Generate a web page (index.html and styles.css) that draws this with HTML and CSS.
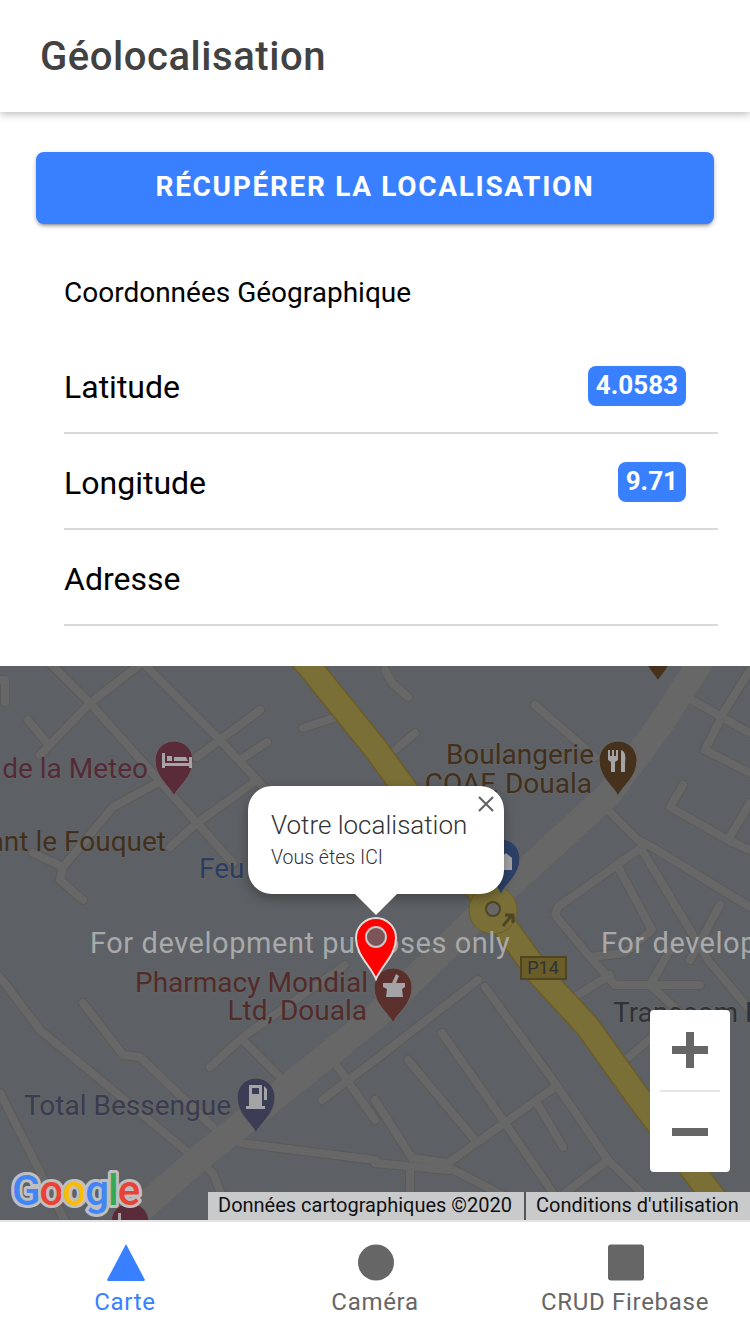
FILE: index.html
```html
<!DOCTYPE html>
<html lang="fr">
<head>
  <meta charset="utf-8">
  <title>Géolocalisation</title>
  <link rel="stylesheet" href="styles.css">
</head>
<body>

<!-- header -->
<header class="top_bar">
  <h1 class="top_title">Géolocalisation</h1>
</header>

<main class="content">
  <div class="btn_holder">
    <button type="button" class="locate_btn">Récupérer la localisation</button>
  </div>

  <p class="coords_title">Coordonnées Géographique</p>

  <div class="coords_list">
    <div class="coords_row">
      <span>Latitude</span>
      <span class="badge">4.0583</span>
    </div>
    <div class="coords_row">
      <span>Longitude</span>
      <span class="badge">9.71</span>
    </div>
    <div class="coords_row">
      <span>Adresse</span>
    </div>
  </div>

  <!-- map, coordinates in the svg are page coordinates -->
  <div class="map">
    <svg class="map_canvas" viewBox="0 666 750 554" width="750" height="554">
      <defs>
        <g id="small_roads">
          <path d="M47 660 90 703 197 823 233 863"/>
          <path d="M143 662 90 703 40 755"/>
          <path d="M28 720 47 743"/>
          <path d="M147 667 217 737 257 780 275 800"/>
          <path d="M260 710 197 757"/>
          <path d="M267 742 240 760"/>
          <path d="M157 783 113 807 63 867 60 880 83 900"/>
          <path d="M253 783 197 823 170 847"/>
          <path d="M33 853 63 867"/>
          <path d="M-5 680H5V702"/>
          <path d="M303 728 337 717"/>
          <path d="M385 670 392 683 408 697"/>
          <path d="M415 733 395 750"/>
          <path d="M535 705 595 757"/>
          <path d="M692 700 750 733"/>
          <path d="M725 710 750 670"/>
          <path d="M725 710 705 750 750 773"/>
          <path d="M683 785 670 807 728 840 750 850"/>
          <path d="M728 840 750 803"/>
          <path d="M608 810 638 840 652 847 750 907"/>
          <path d="M642 850 708 960 750 1010"/>
          <path d="M642 847 558 907 555 915 590 957 625 953 652 930 618 867"/>
          <path d="M720 905 690 960"/>
          <path d="M590 957 615 985 700 985"/>
          <path d="M478 980 375 1060 322 1100"/>
          <path d="M442 1033 503 1120 575 1225"/>
          <path d="M408 1060 475 1140"/>
          <path d="M375 1100 412 1158 448 1163 555 1087"/>
          <path d="M485 987 555 1083 608 1160 642 1193 660 1220"/>
          <path d="M608 1160 565 1193"/>
          <path d="M448 1167 560 1225"/>
          <path d="M537 1103 563 1147"/>
          <path d="M410 1167V1190"/>
          <path d="M375 1163 448 1170"/>
          <path d="M625 1060 655 1035"/>
          <path d="M0 977 40 1030 213 1173 233 1225"/>
          <path d="M83 1003 123 1055 140 1057 213 1127"/>
          <path d="M210 1067 243 1037 345 965"/>
          <path d="M243 1040 280 1077"/>
          <path d="M335 1063 375 1120"/>
          <path d="M240 1143 375 1160"/>
          <path d="M0 1093 67 1225"/>
          <path d="M670 950 650 985 710 1040"/>
          <path d="M570 1000 610 975"/>
        </g>
      </defs>
      <use href="#small_roads" class="road_edge"/>
      <use href="#small_roads" class="road"/>
      <path class="road_wide" d="M705 655 660 725 608 795 508 887 375 1017 197 1160 140 1210"/>
      <path class="highway_edge" d="M290 645 309 666 375 748 493 910 540 975 588 1027 635 1093 708 1190 735 1225"/>
      <path class="highway" d="M290 645 309 666 375 748 493 910 540 975 588 1027 635 1093 708 1190 735 1225"/>
      <circle class="roundabout" cx="493" cy="910" r="24"/>
      <circle class="round_hole" cx="493" cy="909" r="7"/>
      <path class="arrow" d="M503 926 512 915M505 915H513V923"/>

      <text class="for_dev" x="90" y="953">For development purposes only</text>
      <text class="for_dev" x="601" y="953">For development purposes only</text>

      <!-- poi pins -->
      <path class="pin pin_hotel" d="M174 796C170 786 155 778 155 760A19 19 0 0 1 193 760C193 778 178 786 174 796Z"/>
      <path class="pin_glyph" d="M162 753H165V763H189V757H192V768H189V766H165V768H162ZM167 756H172V761H167ZM174 757 186 757 188 761H174Z"/>
      <path class="pin pin_food" d="M618 796C614 786 599 778 599 760A19 19 0 0 1 637 760C637 778 622 786 618 796Z"/>
      <path class="pin_glyph" d="M608 750H610V756H612V750H614V756H616V750H618V760L615 762V772H611V762L608 760ZM621 750C625 751 626 756 625 762V772H621Z"/>
      <path class="pin pin_food" d="M658 681C655 675 648 670 646 660H670C668 670 661 675 658 681Z"/>
      <path class="pin pin_hosp" d="M501 894C497 884 482 876 482 858A19 19 0 0 1 520 858C520 876 505 884 501 894Z"/>
      <path class="pin_glyph" d="M500 858 506 853 512 858V870H500Z"/>
      <path class="pin pin_pharm" d="M393 1023C389 1013 374 1005 374 987A19 19 0 0 1 412 987C412 1005 397 1013 393 1023Z"/>
      <path class="pin_glyph" d="M383 983H405V987L402 989 403 997H386L387 989 383 987ZM392 983 396 974 399 976 396 983Z"/>
      <path class="pin pin_fuel" d="M256 1133C252 1123 237 1115 237 1097A19 19 0 0 1 275 1097C275 1115 260 1123 256 1133Z"/>
      <path class="pin_glyph" d="M249 1085H262V1106H265V1109H246V1106H249ZM252 1088V1094H259V1088ZM264 1086 267 1089V1100H264Z"/>
      <path class="pin pin_hotel" d="M130 1245C126 1235 111 1227 111 1222A19 19 0 0 1 149 1222C149 1227 134 1235 130 1245Z"/>
      <path class="pin_glyph" d="M118 1213H121V1220H142V1224H118Z"/>

      <text class="label label_hotel" x="148" y="778" text-anchor="end">de la Meteo</text>
      <text class="label label_food" x="166" y="851" text-anchor="end">ant le Fouquet</text>
      <text class="label label_hosp" x="199" y="878">Feu</text>
      <text class="label label_food" x="594" y="764" text-anchor="end">Boulangerie</text>
      <text class="label label_food" x="592" y="793" text-anchor="end">COAF, Douala</text>
      <text class="label label_pharm" x="135" y="992">Pharmacy Mondial</text>
      <text class="label label_pharm" x="367" y="1020" text-anchor="end">Ltd, Douala</text>
      <text class="label label_fuel" x="24" y="1115">Total Bessengue</text>
      <text class="label label_dark" x="613" y="1022">Transcom Pro</text>

      <rect class="shield" x="521" y="957" width="45" height="22"/>
      <text class="shield_text" x="543" y="974" text-anchor="middle">P14</text>

      <!-- google logo -->
      <text class="google" x="12" y="1205"><tspan class="g_blue">G</tspan><tspan class="g_red">o</tspan><tspan class="g_yellow">o</tspan><tspan class="g_blue">g</tspan><tspan class="g_green">l</tspan><tspan class="g_red">e</tspan></text>

      <!-- red location pin -->
      <path class="here_pin" d="M376 979C370 965 356 955 356 938A20 20 0 0 1 396 938C396 955 382 965 376 979Z"/>
      <circle class="here_dot" cx="376" cy="937" r="10"/>
    </svg>

    <!-- info window -->
    <div class="info_window">
      <div class="info_title">Votre localisation</div>
      <div class="info_text">Vous êtes ICI</div>
      <svg class="info_close" viewBox="0 0 16 16" width="16" height="16"><path d="M1 1 15 15M15 1 1 15"/></svg>
    </div>

    <!-- zoom control -->
    <div class="zoom_box">
      <div class="zoom_btn">
        <svg viewBox="0 0 36 36" width="36" height="36"><path d="M14 0H22V14H36V22H22V36H14V22H0V14H14Z"/></svg>
      </div>
      <div class="zoom_line"></div>
      <div class="zoom_btn">
        <svg viewBox="0 0 36 36" width="36" height="36"><path d="M0 14H36V22H0Z"/></svg>
      </div>
    </div>

    <div class="attribution">
      <span class="attr_item attr_first">Données cartographiques ©2020</span>
      <span class="attr_item attr_last">Conditions d'utilisation</span>
    </div>
  </div>
</main>

<!-- tabs -->
<nav class="tab_bar">
  <div class="tab tab_active">
    <svg viewBox="0 0 38 37" width="38" height="37"><path d="M19 0 38 36 37 37H1L0 36Z"/></svg>
    <span>Carte</span>
  </div>
  <div class="tab">
    <svg viewBox="0 0 36 36" width="36" height="37"><circle cx="18" cy="18" r="18"/></svg>
    <span>Caméra</span>
  </div>
  <div class="tab">
    <svg viewBox="0 0 36 36" width="36" height="37"><rect width="36" height="36" rx="3"/></svg>
    <span>CRUD Firebase</span>
  </div>
</nav>

</body>
</html>
```

FILE: styles.css
```css
/** page **/
html, body {
  margin: 0;
  padding: 0;
  background-color: #FFFFFF;
}

body {
  width: 750px;
  height: 1334px;
  overflow: hidden;
  display: flex;
  flex-direction: column;
  font-family: Roboto, "Liberation Sans", sans-serif;
}

/** header **/
.top_bar {
  height: 112px;
  flex: none;
  display: flex;
  align-items: center;
  padding-left: 40px;
  background-color: #FFFFFF;
  box-shadow: 0 2px 8px rgba(0, 0, 0, 0.28);
  position: relative;
  z-index: 2;
}

.top_title {
  margin: 0;
  font-size: 40px;
  font-weight: 500;
  letter-spacing: 0.55px;
  color: #424242;
}

/** content **/
.content {
  flex: 1;
  display: flex;
  flex-direction: column;
  min-height: 0;
}

.btn_holder {
  padding: 40px 36px 0 36px;
}

.locate_btn {
  display: block;
  width: 100%;
  height: 72px;
  padding: 0 0 4px 0;
  border: 0;
  border-radius: 8px;
  background-color: #3880FF;
  color: #FFFFFF;
  font-family: inherit;
  font-size: 28px;
  font-weight: 700;
  letter-spacing: 1.67px;
  text-transform: uppercase;
  box-shadow: 0 3px 3px -2px rgba(0, 0, 0, 0.3), 0 2px 5px rgba(0, 0, 0, 0.25);
}

.coords_title {
  margin: 0;
  padding: 52px 0 0 64px;
  height: 66px;
  font-size: 28px;
  line-height: 33px;
  color: #000000;
  box-sizing: content-box;
}

.coords_list {
  margin-left: 64px;
  margin-right: 32px;
}

.coords_row {
  height: 94px;
  box-sizing: content-box;
  display: flex;
  align-items: center;
  justify-content: space-between;
  padding-right: 32px;
  border-bottom: 2px solid #D9D9D9;
  font-size: 32px;
  line-height: 38px;
  color: #000000;
}

.coords_row span:first-child {
  padding-top: 4px;
}

.badge {
  height: 40px;
  display: flex;
  align-items: center;
  padding: 0 8px 2px 8px;
  box-sizing: border-box;
  margin-top: 2px;
  border-radius: 8px;
  background-color: #3880FF;
  color: #FFFFFF;
  font-size: 26px;
  font-weight: 700;
}

/** map **/
.map {
  position: relative;
  margin-top: 40px;
  height: 554px;
  flex: none;
  overflow: hidden;
  background-color: #5D6064;
}

.map_canvas {
  display: block;
}

.road, .road_edge {
  fill: none;
  stroke-linecap: round;
  stroke-linejoin: round;
}

.road {
  stroke: #676767;
  stroke-width: 8;
}

.road_edge {
  stroke: #5A5A5A;
  stroke-width: 10;
}

.road_wide {
  fill: none;
  stroke: #676767;
  stroke-width: 26;
}

.highway {
  fill: none;
  stroke: #7A6F36;
  stroke-width: 23;
}

.highway_edge {
  fill: none;
  stroke: #6B5D28;
  stroke-width: 26;
}

.roundabout {
  fill: #7A6F36;
  stroke: #6B5D28;
  stroke-width: 1;
}

.round_hole {
  fill: #666666;
  stroke: #4E4524;
  stroke-width: 2;
}

.arrow {
  fill: none;
  stroke: #4E4524;
  stroke-width: 3;
}

.for_dev {
  font-size: 29px;
  letter-spacing: 0.55px;
  fill: #A8A9AA;
}

.pin {
  stroke: #666666;
  stroke-width: 1;
}

.pin_hotel { fill: #5A2C3A; }
.pin_food { fill: #46321C; }
.pin_hosp { fill: #2D4167; }
.pin_pharm { fill: #5A2F2C; }
.pin_fuel { fill: #3B3D54; }

.pin_glyph {
  fill: #A4A4A6;
}

.label {
  font-size: 28px;
  stroke: #666666;
  stroke-width: 2px;
  stroke-opacity: 0.7;
  paint-order: stroke;
}

.label_hotel { fill: #552A38; }
.label_food { fill: #42301C; }
.label_hosp { fill: #2B3D60; }
.label_pharm { fill: #522B2A; }
.label_fuel { fill: #393B50; }
.label_dark { fill: #2F3338; }

.shield {
  fill: #6B5D28;
  stroke: #4E4524;
  stroke-width: 2;
}

.shield_text {
  font-size: 18px;
  fill: #2F3338;
}

.google {
  font-family: Roboto, "Liberation Sans", sans-serif;
  font-size: 42px;
  font-weight: 500;
  letter-spacing: -1px;
  stroke: #BFBFC1;
  stroke-width: 6px;
  stroke-linejoin: round;
  paint-order: stroke;
}

.g_blue { fill: #4285F4; }
.g_red { fill: #EA4335; }
.g_yellow { fill: #FBBC05; }
.g_green { fill: #34A853; }

.here_pin {
  fill: #FF0000;
  stroke: #E4DADA;
  stroke-width: 2;
}

.here_dot {
  fill: rgba(100, 100, 102, 0.85);
  stroke: #CFC6C6;
  stroke-width: 2;
}

/** this is the popup over the map **/
.info_window {
  position: absolute;
  left: 248px;
  top: 120px;
  width: 256px;
  height: 108px;
  box-sizing: border-box;
  padding: 24px 0 0 23px;
  border-radius: 24px;
  background-color: #FFFFFF;
  box-shadow: 0 4px 12px rgba(0, 0, 0, 0.3);
  color: #333333;
  font-weight: 300;
}

.info_window:after {
  content: "";
  position: absolute;
  left: 107px;
  top: 108px;
  border-left: 21px solid transparent;
  border-right: 21px solid transparent;
  border-top: 21px solid #FFFFFF;
}

.info_title {
  font-size: 26px;
  line-height: 30px;
}

.info_text {
  margin-top: 6px;
  font-size: 19.5px;
  line-height: 24px;
}

.info_close {
  position: absolute;
  top: 10px;
  right: 10px;
  fill: none;
  stroke: #5F5F5F;
  stroke-width: 2;
}

.zoom_box {
  position: absolute;
  left: 650px;
  top: 344px;
  width: 80px;
  height: 162px;
  display: flex;
  flex-direction: column;
  align-items: center;
  border-radius: 4px;
  background-color: #FFFFFF;
}

.zoom_btn {
  flex: 1;
  display: flex;
  align-items: center;
  justify-content: center;
}

.zoom_btn svg {
  fill: #666666;
}

.zoom_line {
  width: 60px;
  height: 2px;
  background-color: #E6E6E6;
}

.attribution {
  position: absolute;
  right: 0;
  bottom: 0;
  width: 542px;
  height: 28px;
  display: flex;
  background-color: #C9CACC;
  color: #111111;
  font-size: 20px;
  line-height: 26px;
}

.attr_item {
  padding: 0 10px;
  white-space: nowrap;
}

.attr_first {
  padding-right: 12px;
}

.attr_last {
  border-left: 2px solid #555555;
}

/** bottom tabs **/
.tab_bar {
  flex: none;
  display: grid;
  grid-template-columns: repeat(3, 1fr);
  border-top: 2px solid #E4E4E4;
  box-sizing: border-box;
  height: 114px;
  background-color: #FFFFFF;
}

.tab {
  display: flex;
  flex-direction: column;
  align-items: center;
  padding-top: 22px;
  color: #666666;
  font-size: 24px;
  letter-spacing: 0.7px;
}

.tab svg {
  fill: #666666;
  margin: 0 0 7px 2px;
}

.tab_active {
  color: #3880FF;
}

.tab_active svg {
  fill: #3880FF;
}
```
